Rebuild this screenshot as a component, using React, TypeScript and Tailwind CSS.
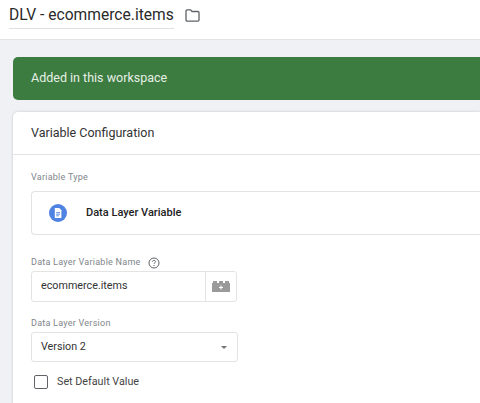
function FolderIcon() {
  return (
    <svg width="15" height="13" viewBox="0 0 16 14" fill="none" stroke="#5f6368" strokeWidth="1.4">
      <path d="M1 2.200C1 1.500 1.500 1 2.200 1H6l1.500 1.700h6.300c.7 0 1.200.5 1.200 1.200v7.900c0 .7-.5 1.200-1.200 1.200H2.200c-.7 0-1.200-.5-1.200-1.200V2.200z" />
    </svg>
  );
}

function DocIcon() {
  return (
    <svg width="18" height="18" viewBox="0 0 18 18">
      <circle cx="9" cy="9" r="9" fill="#4f83e3" />
      <path d="M5.800 4h4.400l2.200 2.200V14H5.800V4z" fill="#fff" />
      <path d="M7.200 8.600h3.800M7.200 10.200h3.800M7.200 11.800h2.600" stroke="#4f83e3" strokeWidth="0.9" />
    </svg>
  );
}

function BrickIcon() {
  return (
    <svg width="18" height="11" viewBox="0 0 18 11">
      <path d="M0 2h1V0h4v2h2V0h4v2h2V0h4v2h1v9H0V2z" fill="#9a9a9a" />
      <path d="M9 4.500v4M7 6.500h4" stroke="#fff" strokeWidth="1.100" />
    </svg>
  );
}

function HelpIcon() {
  return (
    <svg width="12" height="12" viewBox="0 0 12 12" fill="none" stroke="#5f6368">
      <circle cx="6" cy="6" r="5" strokeWidth="1" />
      <path d="M4.500 4.800c0-.9.7-1.400 1.500-1.400s1.500.5 1.500 1.300c0 1.100-1.500 1.200-1.500 2.300" strokeWidth="1" />
      <path d="M6 8v1" strokeWidth="1" />
    </svg>
  );
}

export default function App() {
  return (
    <div className="h-[403px] w-[480px] overflow-hidden bg-[#eff1f4] font-['Roboto',sans-serif]">
      <div className="flex h-10 items-start gap-[11px] border-b border-[#e3e3e3] bg-white pl-[9px]">
        <div className="h-[29px] border-b border-[#e0e0e0] text-[15.600px] leading-[31px] text-[#2a2a2a]">
          DLV - ecommerce.items
        </div>
        <div className="pt-[9px]">
          <FolderIcon />
        </div>
      </div>

      <div className="pl-[13px] pt-[17px]">
        <div className="flex h-[43px] items-center rounded-l-[5px] bg-[#3d7c40] pl-[18px] text-[12.500px] text-[#e6efe6]">
          Added in this workspace
        </div>

        <div className="mt-3 h-[320px] rounded-tl-[5px] bg-white shadow-[0_0_3px_rgba(0,0,0,0.18)]">
          <div className="flex h-[43px] items-center border-b border-[#e3e3e3] pl-[18px] text-[12.500px] text-[#333]">
            Variable Configuration
          </div>

          <div className="pl-[18px] pt-4">
            <div className="text-[9px] leading-[13px] tracking-[0.25px] text-[#80868b]">Variable Type</div>
            <div className="mt-[7px] flex h-11 items-center rounded-l-[4px] border border-r-0 border-[#e3e3e3] pl-[17px]">
              <DocIcon />
              <span className="ml-[19px] text-[11px] font-medium text-[#222]">Data Layer Variable</span>
            </div>

            <div className="mt-[21px] flex h-[14px] items-center gap-[7px] text-[9px] tracking-[0.25px] text-[#80868b]">
              Data Layer Variable Name
              <HelpIcon />
            </div>
            <div className="mt-[1px] flex h-[31px] w-[206px] rounded-[3px] border border-[#e3e3e3]">
              <div className="flex flex-1 items-center pl-[9px] text-[10.750px] text-[#333]">ecommerce.items</div>
              <div className="flex w-[31px] items-center justify-center border-l border-[#e3e3e3]">
                <BrickIcon />
              </div>
            </div>

            <div className="mt-[14px] h-[14px] text-[9px] leading-[14px] tracking-[0.25px] text-[#80868b]">Data Layer Version</div>
            <div className="mt-[2px] flex h-[30px] w-[207px] items-center justify-between rounded-[3px] border border-[#e3e3e3] pl-[9px] pr-[10px] text-[10.750px] text-[#333]">
              Version 2
              <span className="h-0 w-0 border-x-[3.500px] border-t-[3.500px] border-x-transparent border-t-[#757575]" />
            </div>

            <div className="ml-[3px] mt-[13px] flex h-[14px] items-center gap-[9px]">
              <div className="h-[14px] w-[14px] rounded-[2px] border-[1.500px] border-[#5f6368]" />
              <span className="text-[10.750px] text-[#444]">Set Default Value</span>
            </div>
          </div>
        </div>
      </div>
    </div>
  );
}
